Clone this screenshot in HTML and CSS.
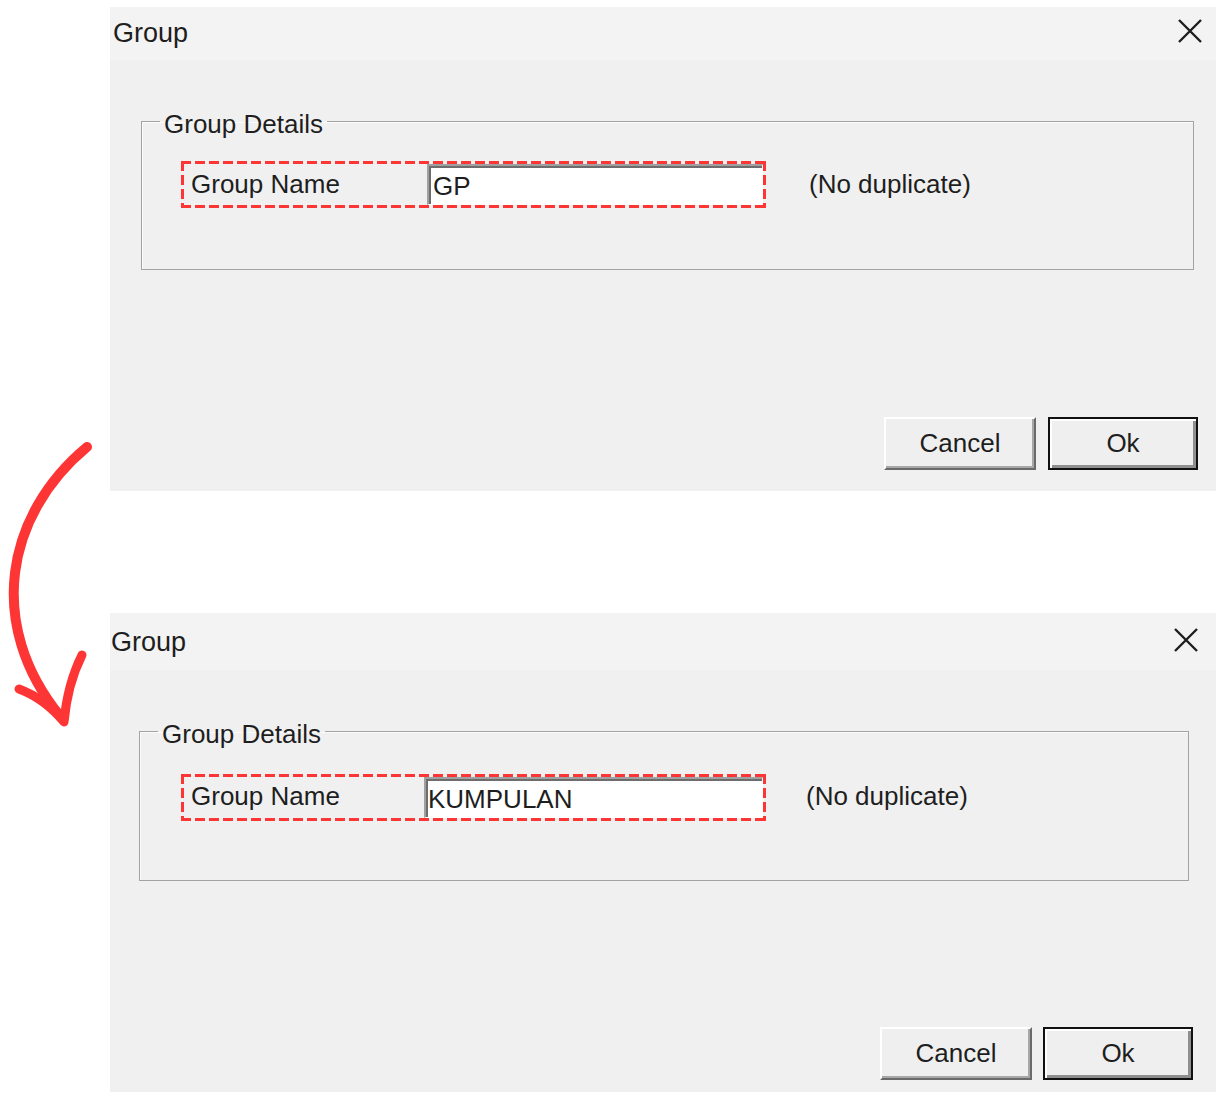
FILE: index.html
```html
<!doctype html>
<html lang="en">
  <head>
    <meta charset="UTF-8" />
    <meta name="viewport" content="width=device-width, initial-scale=1.0" />
    <title>Group dialog: before and after</title>
    <link rel="stylesheet" href="styles.css">
  </head>
  <body>
    <main class="page">
      <!-- Annotation arrow between the two dialogs -->
      <svg class="arrow" width="110" height="300" viewBox="0 440 110 300" aria-hidden="true">
        <path d="M87 447 C 5 515, -14 625, 60 716" fill="none" stroke="#fe3535" stroke-width="10" stroke-linecap="round" />
        <path d="M19 689 C 35 695, 50 705, 64 722 C 66 700, 72 675, 82 655" fill="none" stroke="#fe3535" stroke-width="9" stroke-linecap="round" stroke-linejoin="round" />
      </svg>

      <section class="dialog dialog-before">
        <header class="titlebar">
          <span class="title">Group</span>
          <span class="close">
            <svg width="26" height="26" viewBox="0 0 26 26"><path d="M2 2 L24 24 M24 2 L2 24" stroke="#1e1e1e" stroke-width="2.4" /></svg>
          </span>
        </header>
        <div class="dialog-body">
          <fieldset class="group-box">
            <legend>Group Details</legend>
            <div class="group-content">
              <div class="highlight">
                <label for="name-before">Group Name</label>
                <input id="name-before" class="name-input" type="text" value="GP" />
              </div>
              <span class="hint">(No duplicate)</span>
            </div>
          </fieldset>
          <div class="actions">
            <button type="button" class="btn">Cancel</button>
            <button type="button" class="btn btn-default">Ok</button>
          </div>
        </div>
      </section>

      <section class="dialog dialog-after">
        <header class="titlebar">
          <span class="title">Group</span>
          <span class="close">
            <svg width="26" height="26" viewBox="0 0 26 26"><path d="M2 2 L24 24 M24 2 L2 24" stroke="#1e1e1e" stroke-width="2.4" /></svg>
          </span>
        </header>
        <div class="dialog-body">
          <fieldset class="group-box">
            <legend>Group Details</legend>
            <div class="group-content">
              <div class="highlight">
                <label for="name-after">Group Name</label>
                <input id="name-after" class="name-input" type="text" value="KUMPULAN" />
              </div>
              <span class="hint">(No duplicate)</span>
            </div>
          </fieldset>
          <div class="actions">
            <button type="button" class="btn">Cancel</button>
            <button type="button" class="btn btn-default">Ok</button>
          </div>
        </div>
      </section>
    </main>
  </body>
</html>
```

FILE: styles.css
```css
:root {
  box-sizing: border-box;
  background-color: #fff;
  color: #1e1e1e;
  font: 26px "Liberation Sans", Arial, sans-serif;
}

*,
*:before,
*:after {
  box-sizing: inherit;
}

body {
  margin: 0;
}

.page {
  position: relative;
  display: flex;
  flex-direction: column;
  padding-top: 7px;
  gap: 122px;
}

.arrow {
  position: absolute;
  top: 440px;
  left: 0;
}

/* Window */
.dialog {
  display: flex;
  flex-direction: column;
  width: 1106px;
  height: 484px;
  margin-left: 110px;
  background-color: #f0f0f0;
}

.titlebar {
  display: flex;
  align-items: center;
  justify-content: space-between;
  height: 53px;
  padding: 0 13px 6px 3px;
  background-color: #f3f3f3;
}

.title {
  font-size: 27px;
  line-height: 1;
  padding-top: 6px;
}

.close {
  display: flex;
}

.dialog-body {
  display: flex;
  flex: 1;
  flex-direction: column;
}

/* Group box */
.group-box {
  margin: 46px 22px 0 31px;
  padding: 0;
  border: 1px solid #a3a3a3;
  box-shadow: inset 1px 1px 0 #fbfbfb;

  & legend {
    margin-left: 18px;
    padding: 6px 4px 0;
    line-height: 24px;
  }
}

.group-content {
  display: flex;
  align-items: center;
  padding: 25px 0 61px 39px;
  gap: 43px;
}

/* Red dashed annotation round the field */
.highlight {
  display: flex;
  align-items: center;
  width: 585px;
  height: 47px;
  padding: 0 3px 0 10px;
  background:
    repeating-linear-gradient(90deg, #fe3535 0 10px, transparent 10px 14px) top / 100% 3px no-repeat,
    repeating-linear-gradient(90deg, #fe3535 0 10px, transparent 10px 14px) bottom / 100% 3px no-repeat,
    repeating-linear-gradient(180deg, #fe3535 0 10px, transparent 10px 14px) left / 3px 100% no-repeat,
    repeating-linear-gradient(180deg, #fe3535 0 10px, transparent 10px 14px) right / 3px 100% no-repeat;

  & label {
    flex: 1;
  }
}

.name-input {
  width: 336px;
  height: 41px;
  padding: 3px 0 0 4px;
  border-style: solid;
  border-width: 2px 1px 1px 2px;
  border-color: #a0a0a0 #ffffff #ffffff #a0a0a0;
  background-color: #fff;
  box-shadow: inset 2px 2px 0 #6d6d6d;
  color: #1e1e1e;
  font: inherit;
  outline: none;
}

/* Buttons */
.actions {
  display: flex;
  justify-content: flex-end;
  margin-top: auto;
  padding: 0 18px 21px 0;
  gap: 12px;
}

.btn {
  width: 152px;
  height: 53px;
  padding: 0;
  border: 2px solid;
  border-color: #ffffff #6a6a6a #6a6a6a #ffffff;
  background-color: #efefef;
  box-shadow: inset -2px -2px 0 #a7a7a7;
  color: #1e1e1e;
  font: inherit;
}

.btn-default {
  width: 150px;
  border-color: #111;
  box-shadow: inset 2px 2px 0 #fff, inset -3px -3px 0 #8f8f8f;
}

/* Second screenshot is cropped slightly differently */
.dialog-after {
  height: 479px;

  & .titlebar {
    height: 57px;
    padding: 0 17px 4px 1px;
  }

  & .group-box {
    margin: 46px 27px 0 29px;
  }

  & .group-content {
    padding: 28px 0 59px 41px;
    gap: 40px;
  }

  & .highlight label {
    margin-top: -3px;
  }

  & .name-input {
    width: 339px;
    padding-left: 2px;
  }

  & .hint {
    margin-top: -3px;
  }

  & .actions {
    padding: 0 23px 12px 0;
    gap: 11px;
  }
}
```
